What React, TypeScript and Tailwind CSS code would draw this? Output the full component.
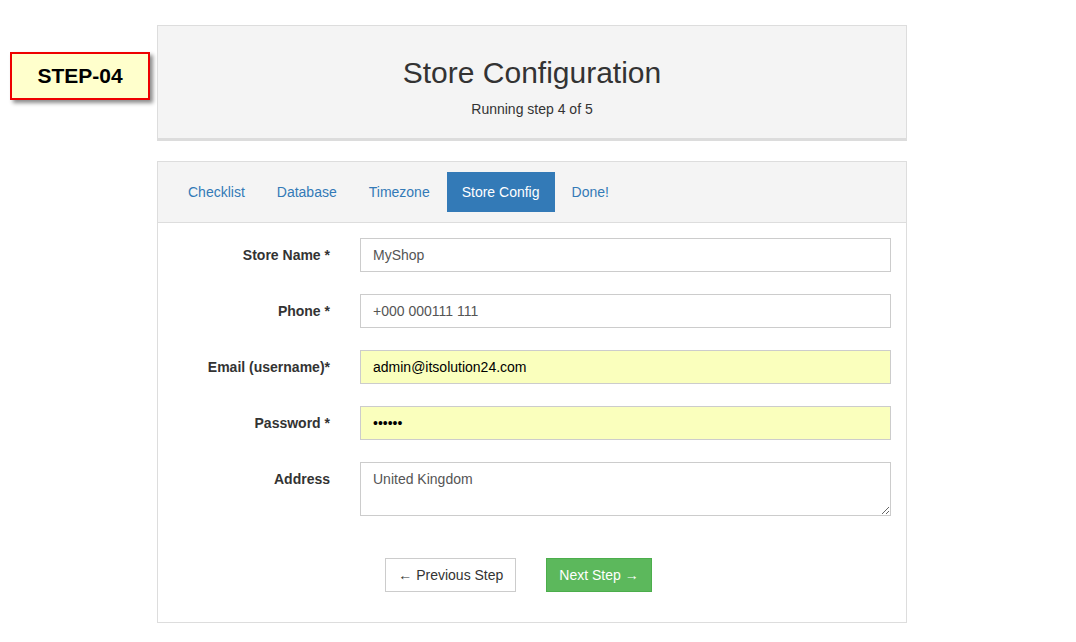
import React from 'react';

const tabs = ['Checklist', 'Database', 'Timezone', 'Store Config', 'Done!'];

interface FieldProps {
    label: string;
    value: string;
    autofill?: boolean;
    password?: boolean;
}

function Field({ label, value, autofill = false, password = false }: FieldProps) {
    return (
        <div className="flex items-start">
            <label className="w-[187px] pr-[15px] pt-[7px] text-right text-[14px] font-bold leading-[20px] text-[#333]">
                {label}
            </label>
            <div className="flex-1 px-[15px]">
                <input
                    type={password ? 'password' : 'text'}
                    defaultValue={value}
                    className={`block h-[34px] w-full border border-[#ccc] px-[12px] text-[14px] outline-none ${autofill ? 'bg-[#faffbd] text-[#000]' : 'bg-white text-[#555]'}`}
                />
            </div>
        </div>
    );
}

export default function App() {
    return (
        <div className="relative min-h-[642px] bg-white font-['Liberation_Sans',Arial,sans-serif] text-[#333]">
            {/* Step badge (sits to the left of the panels) */}
            <div className="absolute left-[10px] top-[52px] flex h-[48px] w-[140px] items-center justify-center border-2 border-[#ee0000] bg-[#ffffcc] shadow-[3px_3px_4px_rgba(0,0,0,0.45)]">
                <span className="text-[21px] font-bold text-black">STEP-04</span>
            </div>

            <div className="mx-auto w-[750px] pt-[25px] translate-x-[-6px]">
                {/* Header */}
                <div className="border border-[#ddd] border-b-[3px] border-b-[#dcdcdc] bg-[#f4f4f4] pt-[27px] pb-[19px] text-center">
                    <h1 className="text-[30px] leading-[40px] text-[#333]">Store Configuration</h1>
                    <p className="mt-[6px] text-[14px] leading-[20px] text-[#333]">Running step 4 of 5</p>
                </div>

                {/* Wizard panel */}
                <div className="mt-[20px] border border-[#ddd]">
                    <div className="flex gap-[2px] border-b border-[#ddd] bg-[#f4f4f4] px-[15px] py-[10px]">
                        {tabs.map((t) => (
                            <span
                                key={t}
                                className={`px-[15px] py-[10px] text-[14px] leading-[20px] ${t === 'Store Config' ? 'bg-[#337ab7] text-white' : 'text-[#337ab7]'}`}
                            >
                                {t}
                            </span>
                        ))}
                    </div>

                    <div className="flex flex-col gap-[22px] pt-[15px]">
                        <Field label="Store Name *" value="MyShop" />
                        <Field label="Phone *" value="+000 000111 111" />
                        <Field label="Email (username)*" value="admin@itsolution24.com" autofill />
                        <Field label="Password *" value="123456" autofill password />
                        <div className="flex items-start">
                            <label className="w-[187px] pr-[15px] pt-[7px] text-right text-[14px] font-bold leading-[20px] text-[#333]">
                                Address
                            </label>
                            <div className="flex-1 px-[15px]">
                                <textarea
                                    defaultValue="United Kingdom"
                                    className="block h-[54px] w-full border border-[#ccc] bg-white px-[12px] py-[6px] text-[14px] leading-[20px] text-[#555] outline-none"
                                />
                            </div>
                        </div>
                    </div>

                    <div className="flex justify-center gap-[30px] pt-[42px] pb-[30px] pr-[27px]">
                        <button className="h-[34px] border border-[#ccc] bg-white px-[12px] text-[14px] text-[#333]">
                            ← Previous Step
                        </button>
                        <button className="h-[34px] border border-[#4cae4c] bg-[#5cb85c] px-[12px] text-[14px] text-white">
                            Next Step →
                        </button>
                    </div>
                </div>
            </div>
        </div>
    );
}
